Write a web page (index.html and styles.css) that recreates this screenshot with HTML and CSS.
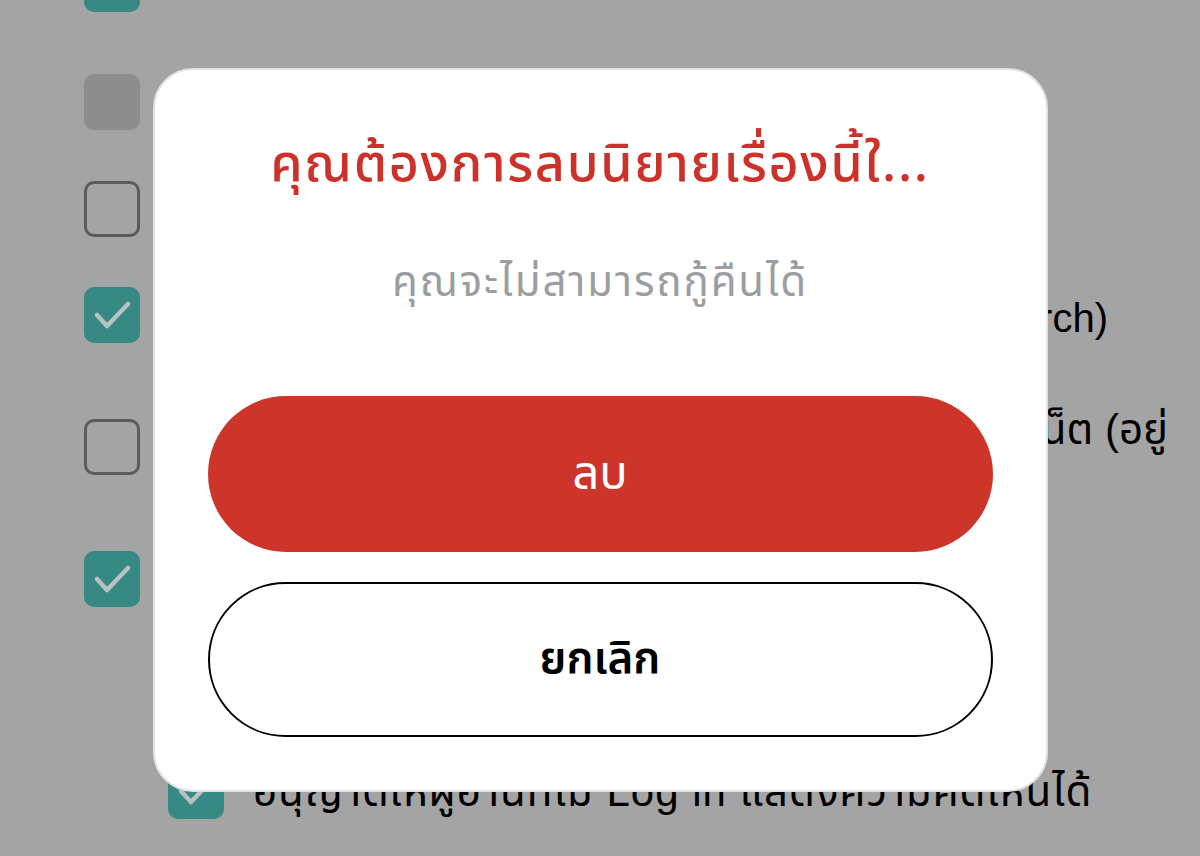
FILE: index.html
```html
<!DOCTYPE html>
<html lang="th">
<head>
<meta charset="utf-8">
<title>ลบนิยาย</title>
<link rel="stylesheet" href="styles.css">
</head>
<body>
<div class="settings">
  <div class="row row-1">
    <span class="box box-on"><svg viewBox="0 0 56 56"><polyline points="13,28 23,39 44,17"/></svg></span>
    <span class="label">เปิดให้อ่าน</span>
  </div>
  <div class="row row-2">
    <span class="box box-disabled"></span>
    <span class="label">จบแล้ว</span>
  </div>
  <div class="row row-3">
    <span class="box box-off"></span>
    <span class="label">มีเนื้อหาสำหรับผู้ใหญ่</span>
  </div>
  <div class="row row-4">
    <span class="box box-on"><svg viewBox="0 0 56 56"><polyline points="13,28 23,39 44,17"/></svg></span>
    <span class="label label-right label-w1">แสดงในผลการค้นหา (Search)</span>
  </div>
  <div class="row row-5">
    <span class="box box-off"></span>
    <span class="label label-right label-w2">ให้ค้นหาผ่านอินเทอร์เน็ต (อยู่</span>
  </div>
  <div class="row row-6">
    <span class="box box-on"><svg viewBox="0 0 56 56"><polyline points="13,28 23,39 44,17"/></svg></span>
    <span class="label">อนุญาตให้แสดงความคิดเห็น</span>
  </div>
  <div class="row row-sub">
    <span class="box box-on"><svg viewBox="0 0 56 56"><polyline points="13,28 23,39 44,17"/></svg></span>
    <span class="label label-wide">อนุญาตให้ผู้อ่านที่ไม่ Log in แสดงความคิดเห็นได้</span>
  </div>
</div>

<div class="overlay">
  <div class="modal">
    <h2 class="modal-title">คุณต้องการลบนิยายเรื่องนี้ใ...</h2>
    <p class="modal-text">คุณจะไม่สามารถกู้คืนได้</p>
    <div class="actions">
      <button class="btn btn-danger">ลบ</button>
      <button class="btn btn-outline">ยกเลิก</button>
    </div>
  </div>
</div>
</body>
</html>
```
FILE: styles.css
```css
html, body {
  margin: 0;
  padding: 0;
  height: 100%;
  overflow: hidden;
}
body {
  background: #a4a4a4;
  font-family: "Liberation Sans", "Noto Sans Thai", "Noto Sans Thai UI", "Noto Sans", sans-serif;
  color: #000;
}
.settings {
  display: flex;
  flex-direction: column;
  padding-left: 84px;
  margin-top: -44px;
}
.row {
  display: flex;
  align-items: flex-start;
  gap: 29px;
}
.row-1 { height: 118px; }
.row-2 { height: 107px; }
.row-3 { height: 106px; }
.row-4 { height: 132px; }
.row-5 { height: 132px; }
.row-6 { height: 212px; }
.row-sub { padding-left: 84px; }

.box {
  flex: none;
  width: 56px;
  height: 56px;
  box-sizing: border-box;
  border-radius: 10px;
  display: flex;
}
.box svg { width: 56px; height: 56px; }
.box polyline {
  fill: none;
  stroke: #b8c2c0;
  stroke-width: 4.5;
  stroke-linecap: round;
  stroke-linejoin: round;
}
.box-on { background: #368a83; }
.box-disabled { background: #8d8d8d; }
.box-off { border: 3px solid #5b5b5b; }

.label {
  font-size: 42px;
  line-height: 52px;
  white-space: nowrap;
}
.row-4 .label { margin-top: 5px; font-size: 40px; }
.label-right { text-align: right; }
.label-w1 { width: 939px; }
.label-w2 { width: 999px; margin-top: -15px; }
.row-sub .label { margin-top: 3px; }
.label-wide { letter-spacing: 1px; }

.overlay {
  position: fixed;
  inset: 0;
  padding-top: 4px;
  display: flex;
  align-items: center;
  justify-content: center;
}
.modal {
  width: 895px;
  box-sizing: border-box;
  background: #fff;
  border: 2px solid #e2e2e2;
  border-radius: 40px;
  padding: 65px 53px 53px;
  display: flex;
  flex-direction: column;
  align-items: center;
  font-family: "Noto Sans Thai", "Noto Sans Thai UI", "Noto Sans", sans-serif;
}
.modal-title {
  margin: 0;
  font-size: 52px;
  line-height: 60px;
  letter-spacing: 1.7px;
  font-weight: 500;
  color: #cc3229;
  white-space: nowrap;
}
.modal-text {
  margin: 63px 0 0;
  font-size: 42px;
  line-height: 50px;
  letter-spacing: 1.9px;
  color: #9b9ea0;
}
.actions {
  margin-top: 88px;
  width: 100%;
  display: flex;
  flex-direction: column;
  gap: 30px;
}
.btn {
  width: 100%;
  height: 156px;
  border-radius: 78px;
  font-family: inherit;
  cursor: pointer;
}
.btn-danger {
  background: #cd352a;
  border: none;
  color: #fff;
  font-size: 47px;
  font-weight: 400;
}
.btn-outline {
  height: 155px;
  background: #fff;
  border: 2.5px solid #000;
  color: #000;
  font-size: 44px;
  font-weight: 600;
}
```
